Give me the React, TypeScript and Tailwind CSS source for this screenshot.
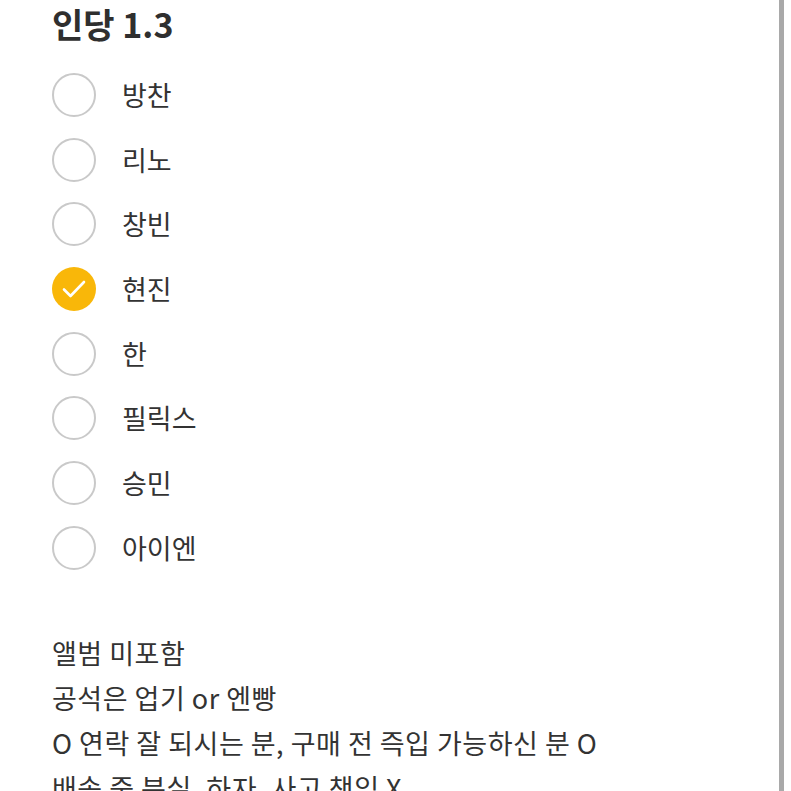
import { useState } from "react";

const MEMBERS: string[] = ["방찬", "리노", "창빈", "현진", "한", "필릭스", "승민", "아이엔"];

const NOTES: string[] = [
  "앨범 미포함",
  "공석은 업기 or 엔빵",
  "O 연락 잘 되시는 분, 구매 전 즉입 가능하신 분 O",
  "배송 중 분실, 하자, 사고 책임 X",
];

const CheckIcon = () => (
  <svg width="26" height="20" viewBox="0 0 26 20" fill="none">
    <path d="M3 10.5l6.5 6.5L23 3" stroke="#fff" strokeWidth="2.6" strokeLinecap="round" strokeLinejoin="round" />
  </svg>
);

export default function App() {
  const [selected, setSelected] = useState<string>("현진");

  return (
    <div
      className="flex h-[791px] w-[791px] overflow-hidden bg-white text-[#333]"
      style={{ fontFamily: '"Noto Sans CJK KR", "Noto Sans", sans-serif' }}
    >
      <div className="flex-1 pl-[52px] pt-[4px]">
        <h1 className="text-[34px] font-bold leading-[40px] text-[#2f2f2f]">인당 1.3</h1>

        <div className="mt-[29px] flex flex-col gap-[20.7px]">
          {MEMBERS.map((name) => {
            const checked = selected === name;
            return (
              <button
                key={name}
                className="flex h-[44px] items-center gap-[26px] text-left"
                onClick={() => setSelected(name)}
              >
                {checked ? (
                  <span className="flex h-[44px] w-[44px] items-center justify-center rounded-full bg-[#f9b709]">
                    <CheckIcon />
                  </span>
                ) : (
                  <span className="h-[44px] w-[44px] rounded-full border-2 border-[#c9c9c9]" />
                )}
                <span className="text-[27px] leading-[44px] text-[#333]">{name}</span>
              </button>
            );
          })}
        </div>

        <div className="mt-[60px] flex flex-col">
          {NOTES.map((line) => (
            <p key={line} className="whitespace-nowrap text-[27px] leading-[45px] tracking-[0.5px] text-[#333]">
              {line}
            </p>
          ))}
        </div>
      </div>
      <div className="h-full w-[5px] bg-[#a9a9a9]" />
      <div className="h-full w-[7px] bg-white" />
    </div>
  );
}
